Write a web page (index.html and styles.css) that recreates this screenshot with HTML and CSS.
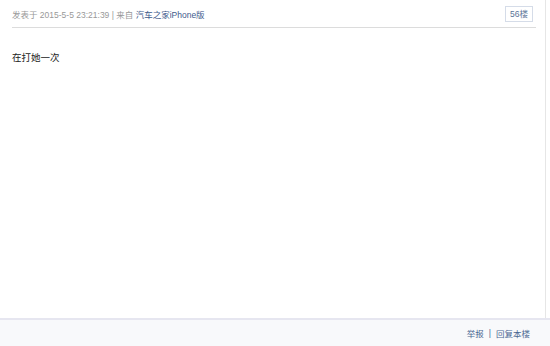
FILE: index.html
```html
<!DOCTYPE html>
<html>
  <head>
    <meta charset="UTF-8" />
    <title>56楼</title>
    <link rel="stylesheet" href="styles.css">
  </head>
  <body>
    <div class="post">
      <div class="post-main">
        <div class="post-head">
          <span class="post-info">发表于 2015-5-5 23:21:39 | 来自 <a href="#" class="from-link">汽车之家iPhone版</a></span>
          <span class="floor">56楼</span>
        </div>
        <div class="post-body">在打她一次</div>
      </div>
      <div class="post-foot">
        <a href="#">举报</a>
        <span class="sep">|</span>
        <a href="#">回复本楼</a>
      </div>
    </div>
  </body>
</html>
```

FILE: styles.css
```css
html, body {
  margin: 0;
  padding: 0;
  height: 100%;
  background-color: #fff;
}
body {
  font-family: "Liberation Sans", "Noto Sans CJK SC", sans-serif;
  color: #333;
}
a {
  text-decoration: none;
}
.post {
  display: flex;
  flex-direction: column;
  height: 346px;
}
.post-main {
  flex: 1;
  margin-right: 4px;
  padding: 0 9px 0 12px;
  border-right: 1px solid #e6e6e6;
  background-color: #fff;
}
.post-head {
  display: flex;
  align-items: center;
  justify-content: space-between;
  height: 27px;
  border-bottom: 1px solid #dcdcdc;
  padding-right: 3px;
}
.post-info {
  font-size: 8.5px;
  color: #999;
}
.from-link {
  color: #3e5a8c;
}
.floor {
  font-size: 8.5px;
  color: #5a7398;
  padding: 1px 4px;
  border: 1px solid #d5dce8;
  line-height: 12px;
}
.post-body {
  padding-top: 22px;
  font-size: 9.5px;
  color: #222;
}
.post-foot {
  display: flex;
  justify-content: flex-end;
  align-items: center;
  gap: 5px;
  height: 26px;
  padding-right: 20px;
  border-top: 2px solid #e6e6f0;
  background-color: #f8f9fb;
  font-size: 8.5px;
}
.post-foot a {
  color: #4a6792;
}
.sep {
  color: #4a6792;
}
```
